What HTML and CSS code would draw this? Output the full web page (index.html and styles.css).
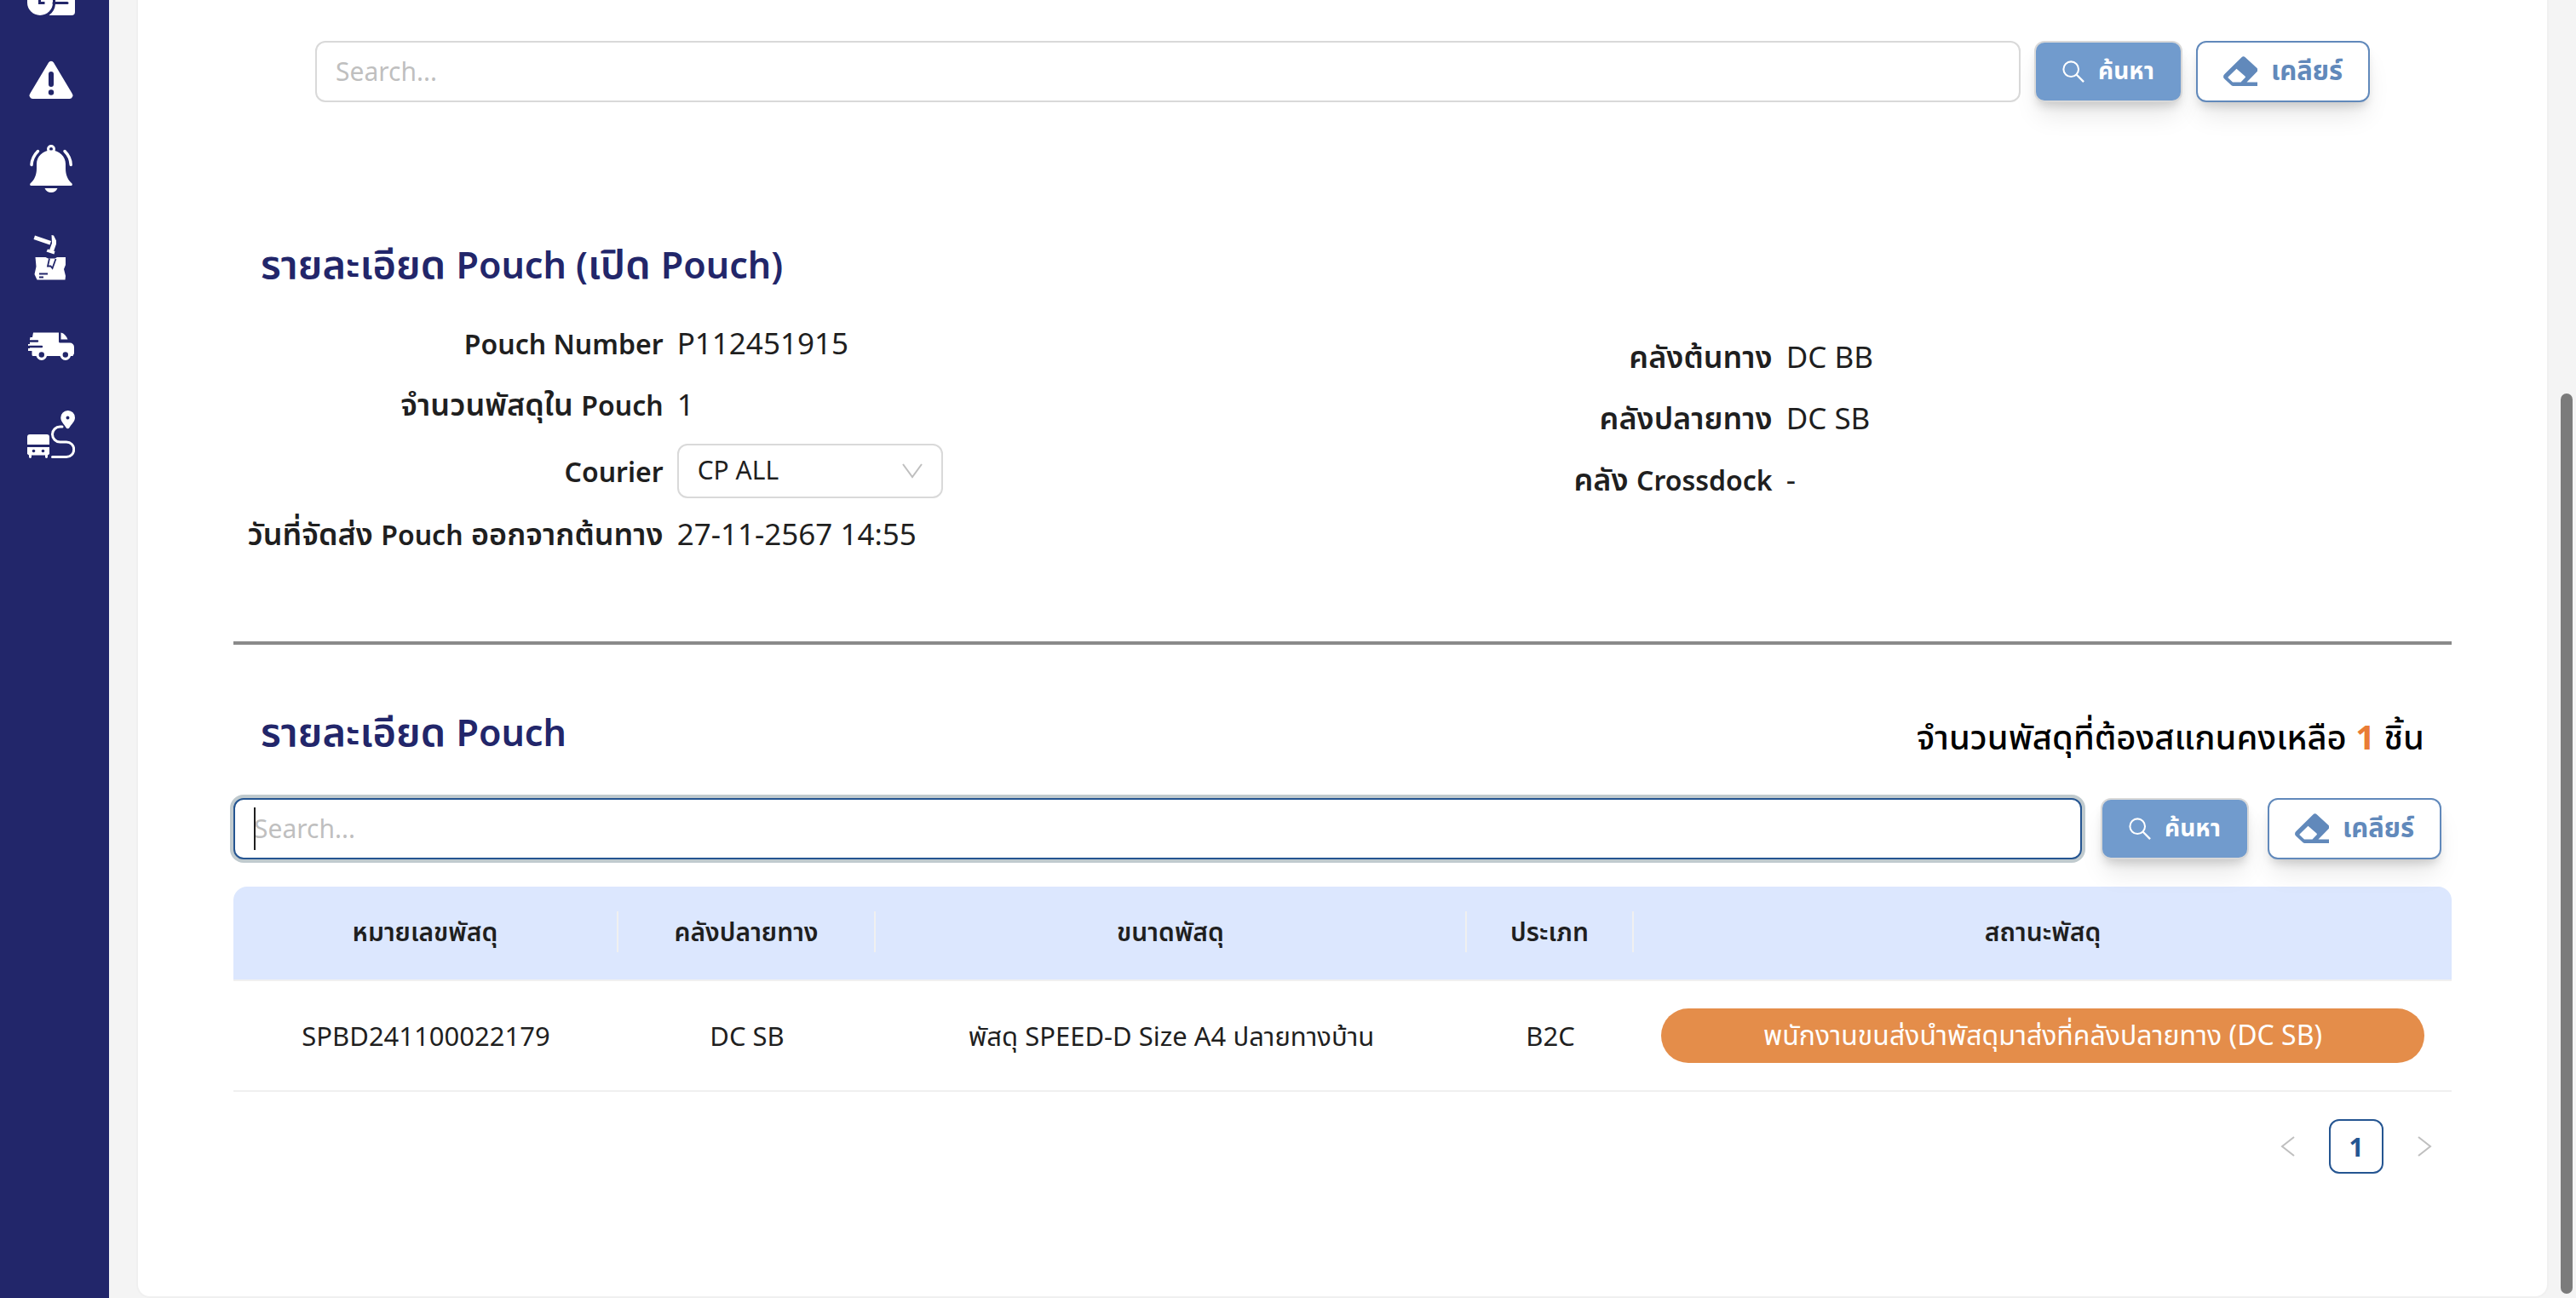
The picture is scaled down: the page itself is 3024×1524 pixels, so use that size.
FILE: index.html
```html
<!DOCTYPE html>
<html lang="th">
<head>
  <meta charset="utf-8">
  <meta name="viewport" content="width=device-width, initial-scale=1">
  <title>รายละเอียด Pouch</title>
  <link rel="stylesheet" href="styles.css">
</head>
<body>
  <svg class="sprite" aria-hidden="true">
    <symbol id="i-search" viewBox="0 0 28 28">
      <circle cx="11" cy="11" r="9.500" fill="none" stroke="currentColor" stroke-width="2.200"/>
      <path d="M17.500 17.500 27 27" fill="none" stroke="currentColor" stroke-width="2.500"/>
    </symbol>
    <symbol id="i-eraser" viewBox="0 0 40 36">
      <path fill="currentColor" fill-rule="evenodd" d="M21.500 1.200a3 3 0 0 1 4.200 0L39 13.500a3.500 3.500 0 0 1 .2 5L27.500 30.500H40V35H11.500a3 3 0 0 1-2-.8L1.200 26.500a3.500 3.500 0 0 1 0-5.200zM15.500 14.800 6 24a1.200 1.200 0 0 0 0 1.800l5 4.700h9.500l5-5.200a1.200 1.200 0 0 0 0-1.700z"/>
    </symbol>
  </svg>

  <nav class="sidebar" aria-label="เมนูหลัก">
    <a class="sidebar-link sidebar-link-cut" href="#payment" aria-label="การชำระเงิน">
      <svg width="56" height="18" viewBox="0 0 56 18" fill="#fff">
        <path d="M0 0h30v3a15 15 0 0 1-30 0z"/>
        <path d="M33 0h23v14a4 4 0 0 1-4 4H25.500a18 18 0 0 0 7.500-13z"/>
        <path d="M14.500 0v3.500h6" fill="none" stroke="#22266a" stroke-width="3"/>
        <path d="M31 3.500h16" stroke="#22266a" stroke-width="3" stroke-linecap="round"/>
      </svg>
    </a>
    <a class="sidebar-link" href="#alerts" aria-label="แจ้งปัญหา">
      <svg width="56" height="56" viewBox="0 0 56 56" fill="#fff">
        <path d="M25 7.500a3.500 3.500 0 0 1 6 0l21.500 36A4 4 0 0 1 49.500 50h-43a4 4 0 0 1-3-6.500z"/>
        <path d="M28 21v12" stroke="#22266a" stroke-width="6" stroke-linecap="round"/>
        <circle cx="28" cy="42.500" r="3.200" fill="#22266a"/>
      </svg>
    </a>
    <a class="sidebar-link" href="#notifications" aria-label="การแจ้งเตือน">
      <svg width="56" height="56" viewBox="0 0 56 56" fill="#fff">
        <circle cx="28" cy="5" r="3.500" fill="none" stroke="#fff" stroke-width="3"/>
        <path d="M28 6.500c9.500 0 17 7 17 16v5c0 8 2.500 13.500 7.500 18 .8 1 .2 2.500-1 2.500h-47c-1.200 0-1.800-1.500-1-2.500 5-4.500 7.500-10 7.500-18v-5c0-9 7.500-16 17-16z"/>
        <path d="M20.500 51h15c-1.500 3.200-4 5-7.500 5s-6-1.800-7.500-5z"/>
        <path d="M12.500 7.500C8 12 5.500 17 5 23.500M44 7.500c4.500 4.500 7 9.500 7.200 16" fill="none" stroke="#fff" stroke-width="3.500" stroke-linecap="round"/>
      </svg>
    </a>
    <a class="sidebar-link" href="#open-pouch" aria-label="เปิด Pouch">
      <svg width="56" height="56" viewBox="0 0 56 56" fill="#fff">
        <path d="m9 2.500 19 6.500-1.500 4.500L7.500 7z"/>
        <path d="M28.500 2 31 2.500l3 6v4l-3 8.500-5-1.500 3-8z"/>
        <path d="m24 18.500 8.500 2.500-1 3.500-9-3z"/>
        <path d="M9.500 28h12l3 1.500h8L35 28h10v9l-2 5 2 8-.5 4.500H11.500L8.500 48l2-9z"/>
        <path d="M26 29.500 24 38.500l3.500 0 2 2.500 4-11" fill="none" stroke="#22266a" stroke-width="1.800"/>
        <path d="M14 47.500h10M14 51.500h5" stroke="#22266a" stroke-width="1.800"/>
      </svg>
    </a>
    <a class="sidebar-link" href="#delivery" aria-label="การจัดส่ง">
      <svg width="56" height="56" viewBox="0 0 56 56" fill="#fff">
        <path d="M7 12.500h30V23a1.500 1.500 0 0 0 1.500 1.500H50a5 5 0 0 1 5 5v7.500l-1.500 3H7a1.500 1.500 0 0 1-1.500-1.500V34H1v-3h2v-2H1v-3h2v-5.500L3.500 18H6z"/>
        <path d="M39.500 12.500c4 1 6.500 4 8 8H39.500z"/>
        <path d="M3 22.500h9M2 29h15" stroke="#22266a" stroke-width="2.400" stroke-linecap="round"/>
        <circle cx="16.800" cy="38.500" r="4.800" fill="#22266a" stroke="#fff" stroke-width="3.200"/>
        <circle cx="44.800" cy="38.500" r="4.800" fill="#22266a" stroke="#fff" stroke-width="3.200"/>
      </svg>
    </a>
    <a class="sidebar-link" href="#routes" aria-label="เส้นทาง">
      <svg width="56" height="56" viewBox="0 0 56 56" fill="#fff">
        <path fill-rule="evenodd" d="M47.500 0A8.300 8.300 0 0 1 56 8.300C56 13 52 16 49.500 20a2.200 2.200 0 0 1-4 0C43 16 39.300 13 39.300 8.300A8.300 8.300 0 0 1 47.500 0zm0 6.500a2 2 0 1 0 0 4 2 2 0 0 0 0-4z"/>
        <path d="M41 19h-2.500a9 9 0 0 0 0 18H46a8.700 8.700 0 0 1 0 17.500H29.500" fill="none" stroke="#fff" stroke-width="3" stroke-linecap="round"/>
        <path d="M3 28h20a3 3 0 0 1 3 3v9H0v-9a3 3 0 0 1 3-3z"/>
        <path d="M0 43h26v8l-2 1.500v2a1.500 1.500 0 0 1-3 0v-2H5v2a1.500 1.500 0 0 1-3 0v-2L0 51z"/>
        <circle cx="7.500" cy="47.500" r="1.800" fill="#22266a"/>
        <circle cx="18.500" cy="47.500" r="1.800" fill="#22266a"/>
      </svg>
    </a>
  </nav>

  <main class="page">
    <div class="card">
      <form class="search search-main" role="search">
        <input class="field" type="text" placeholder="Search..." aria-label="ค้นหา Pouch">
        <button class="btn btn-primary" type="submit"><svg class="icon-search"><use href="#i-search"/></svg>ค้นหา</button>
        <button class="btn btn-outline" type="reset"><svg class="icon-eraser"><use href="#i-eraser"/></svg>เคลียร์</button>
      </form>

      <section class="detail">
        <h2 class="title">รายละเอียด <span class="latin">Pouch (</span>เปิด <span class="latin">Pouch)</span></h2>
        <div class="detail-columns">
          <dl class="facts">
            <div class="fact"><dt><span class="latin">Pouch Number</span></dt><dd>P112451915</dd></div>
            <div class="fact"><dt>จำนวนพัสดุใน <span class="latin">Pouch</span></dt><dd>1</dd></div>
            <div class="fact fact-tall">
              <dt><label class="latin" for="courier">Courier</label></dt>
              <dd class="select-box">
                <select class="select" id="courier"><option>CP ALL</option></select>
                <svg class="select-arrow" viewBox="0 0 24 20"><path d="m1 2 11 15L23 2" fill="none" stroke="#bfbfbf" stroke-width="2"/></svg>
              </dd>
            </div>
            <div class="fact"><dt>วันที่จัดส่ง <span class="latin">Pouch</span> ออกจากต้นทาง</dt><dd>27-11-2567 14:55</dd></div>
          </dl>
          <dl class="facts facts-right">
            <div class="fact"><dt>คลังต้นทาง</dt><dd>DC BB</dd></div>
            <div class="fact"><dt>คลังปลายทาง</dt><dd>DC SB</dd></div>
            <div class="fact"><dt>คลัง <span class="latin">Crossdock</span></dt><dd>-</dd></div>
          </dl>
        </div>
      </section>

      <hr class="divider">

      <section>
        <div class="list-head">
          <h2 class="title">รายละเอียด <span class="latin">Pouch</span></h2>
          <p class="remaining">จำนวนพัสดุที่ต้องสแกนคงเหลือ <span class="remaining-count">1</span> ชิ้น</p>
        </div>
        <form class="search search-list" role="search">
          <div class="field-wrap">
            <input class="field field-active" type="text" placeholder="Search..." aria-label="ค้นหาพัสดุ">
            <span class="caret"></span>
          </div>
          <button class="btn btn-primary" type="submit"><svg class="icon-search"><use href="#i-search"/></svg>ค้นหา</button>
          <button class="btn btn-outline" type="reset"><svg class="icon-eraser"><use href="#i-eraser"/></svg>เคลียร์</button>
        </form>
        <table class="parcels">
          <colgroup>
            <col class="col-number"><col class="col-dest"><col class="col-size"><col class="col-type"><col>
          </colgroup>
          <thead>
            <tr>
              <th scope="col"><span>หมายเลขพัสดุ</span></th>
              <th scope="col"><span>คลังปลายทาง</span></th>
              <th scope="col"><span>ขนาดพัสดุ</span></th>
              <th scope="col"><span>ประเภท</span></th>
              <th scope="col"><span>สถานะพัสดุ</span></th>
            </tr>
          </thead>
          <tbody>
            <tr>
              <td>SPBD241100022179</td>
              <td>DC SB</td>
              <td>พัสดุ SPEED-D Size A4 ปลายทางบ้าน</td>
              <td>B2C</td>
              <td><span class="status">พนักงานขนส่งนำพัสดุมาส่งที่คลังปลายทาง (DC SB)</span></td>
            </tr>
          </tbody>
        </table>
        <nav class="pager" aria-label="หน้า">
          <button class="pager-btn" type="button" disabled aria-label="ก่อนหน้า"><svg width="18" height="26" viewBox="0 0 18 26"><path d="M16 2 2 13l14 11" fill="none" stroke="#bfbfbf" stroke-width="2"/></svg></button>
          <button class="pager-btn pager-current" type="button" aria-current="page">1</button>
          <button class="pager-btn" type="button" disabled aria-label="ถัดไป"><svg width="18" height="26" viewBox="0 0 18 26"><path d="m2 2 14 11L2 24" fill="none" stroke="#bfbfbf" stroke-width="2"/></svg></button>
        </nav>
      </section>
    </div>
  </main>
  <div class="scroll-thumb"></div>
</body>
</html>
```
FILE: styles.css
```css
* {
  box-sizing: border-box;
}

body {
  display: flex;
  min-height: 100vh;
  margin: 0;
  background: #f4f4f4;
  color: #1f1f1f;
  font-family: "Noto Sans", "Noto Sans Thai", sans-serif;
  font-size: 30px;
}

h2,
p,
dl,
dd {
  margin: 0;
}

button,
input,
select {
  font: inherit;
}

.sprite {
  position: absolute;
  width: 0;
  height: 0;
}

.sidebar {
  display: flex;
  flex: none;
  flex-direction: column;
  gap: 48px;
  width: 128px;
  padding-left: 32px;
  background: #22266a;
}

.sidebar-link {
  display: block;
  height: 56px;
}

.sidebar-link-cut {
  height: 18px;
}

.sidebar-link svg {
  display: block;
}

.page {
  flex: 1;
  min-width: 0;
  padding: 0 32px;
}

.card {
  min-height: 100vh;
  padding: 48px 112px 96px;
  border: 2px solid #f0f0f0;
  border-top: 0;
  border-radius: 0 0 16px 16px;
  background: #fff;
}

.search {
  display: flex;
}

.search-main {
  gap: 16px;
  padding: 0 96px;
}

.search-list {
  gap: 22px;
  padding-right: 12px;
}

.field {
  flex: 1;
  width: 100%;
  min-width: 0;
  height: 72px;
  padding: 0 22px 2px;
  border: 2px solid #d9d9d9;
  border-radius: 12px;
  outline: 0;
  background: #fff;
}

.field::placeholder {
  color: #bfbfbf;
}

.field-wrap {
  position: relative;
  display: flex;
  flex: 1;
}

.field-active {
  border-color: #255591;
  box-shadow: 0 0 0 4px #c0cace;
}

.caret {
  position: absolute;
  top: 11px;
  left: 24px;
  width: 2px;
  height: 50px;
  background: #1f1f1f;
}

.btn {
  display: flex;
  flex: none;
  align-items: center;
  justify-content: center;
  gap: 16px;
  height: 72px;
  padding: 0;
  border: 2px solid #d9d9d9;
  border-radius: 12px;
  font-weight: 700;
  box-shadow: 0 20px 30px -6px rgba(0, 0, 0, 0.1), 0 8px 12px -4px rgba(0, 0, 0, 0.16);
}

.btn-primary {
  width: 174px;
  background: #719bcd;
  color: #fff;
  font-size: 28px;
}

.btn-outline {
  width: 204px;
  border-color: #6189bb;
  background: #fff;
  color: #6189bb;
  font-size: 31px;
}

.icon-search {
  width: 26px;
  height: 26px;
}

.icon-eraser {
  width: 40px;
  height: 36px;
}

.detail {
  padding-top: 153px;
}

.title {
  padding-left: 32px;
  color: #22266a;
  font-size: 47px;
  font-weight: 600;
  line-height: 72px;
}

.latin {
  line-height: 1;
}

.title .latin {
  font-size: 43px;
}

.detail-columns {
  display: grid;
  grid-template-columns: 1fr 1fr;
  padding-top: 24px;
}

.facts-right {
  padding-top: 16px;
}

.fact {
  display: grid;
  grid-template-columns: 31fr 48fr;
  gap: 16px;
  align-items: center;
  height: 72px;
  padding-bottom: 4px;
  font-size: 35px;
  line-height: 68px;
}

.fact-tall {
  height: 80px;
  padding-bottom: 0;
}

.fact dt {
  font-size: 36px;
  font-weight: 600;
  text-align: right;
  white-space: nowrap;
}

.fact .latin {
  font-size: 32px;
}

.select-box {
  position: relative;
  width: 312px;
  height: 64px;
}

.select {
  display: block;
  width: 100%;
  height: 100%;
  padding: 0 22px 2px;
  border: 2px solid #d9d9d9;
  border-radius: 12px;
  appearance: none;
  background: #fff;
  color: #1f1f1f;
  font-size: 30px;
  line-height: 58px;
}

.select-arrow {
  position: absolute;
  top: 22px;
  right: 24px;
  width: 24px;
  height: 20px;
}

.divider {
  height: 4px;
  margin: 88px 0 0;
  border: 0;
  background: #8a8a8a;
}

.list-head {
  display: flex;
  align-items: flex-end;
  justify-content: space-between;
  padding: 65px 32px 43px 0;
}

.remaining {
  color: #000;
  font-size: 40px;
  font-weight: 500;
  line-height: 58px;
}

.remaining-count {
  color: #e97c35;
  font-weight: 700;
}

.parcels {
  width: 100%;
  margin-top: 32px;
  border-collapse: separate;
  border-spacing: 0;
  table-layout: fixed;
  text-align: center;
}

.col-number {
  width: 452px;
}

.col-dest {
  width: 302px;
}

.col-size {
  width: 694px;
}

.col-type {
  width: 196px;
}

.parcels th {
  height: 111px;
  padding: 0 0 4px;
  border-bottom: 2px solid #f0f0f0;
  background: #dce7fe;
  font-weight: 600;
}

.parcels th span {
  display: block;
  border-right: 2px solid #f0f0f0;
  line-height: 48px;
}

.parcels th:last-child span {
  border-right: 0;
}

.parcels th:first-child {
  border-top-left-radius: 16px;
}

.parcels th:last-child {
  border-top-right-radius: 16px;
}

.parcels td {
  height: 130px;
  padding: 0;
  border-bottom: 2px solid #f0f0f0;
  font-size: 31px;
  line-height: 62px;
}

.status {
  display: block;
  margin: 0 32px;
  padding-bottom: 2px;
  border-radius: 32px;
  background: #e48d4a;
  color: #fff;
  font-size: 32px;
}

.pager {
  display: flex;
  gap: 16px;
  justify-content: flex-end;
  margin-top: 32px;
}

.pager-btn {
  display: flex;
  align-items: center;
  justify-content: center;
  width: 64px;
  height: 64px;
  padding: 0;
  border: 0;
  border-radius: 12px;
  background: #fff;
}

.pager-current {
  border: 2px solid #255591;
  color: #255591;
  font-weight: 700;
}

.scroll-thumb {
  position: fixed;
  top: 462px;
  right: 4px;
  bottom: 5px;
  width: 14px;
  border-radius: 7px;
  background: #7b7b7b;
}
```
